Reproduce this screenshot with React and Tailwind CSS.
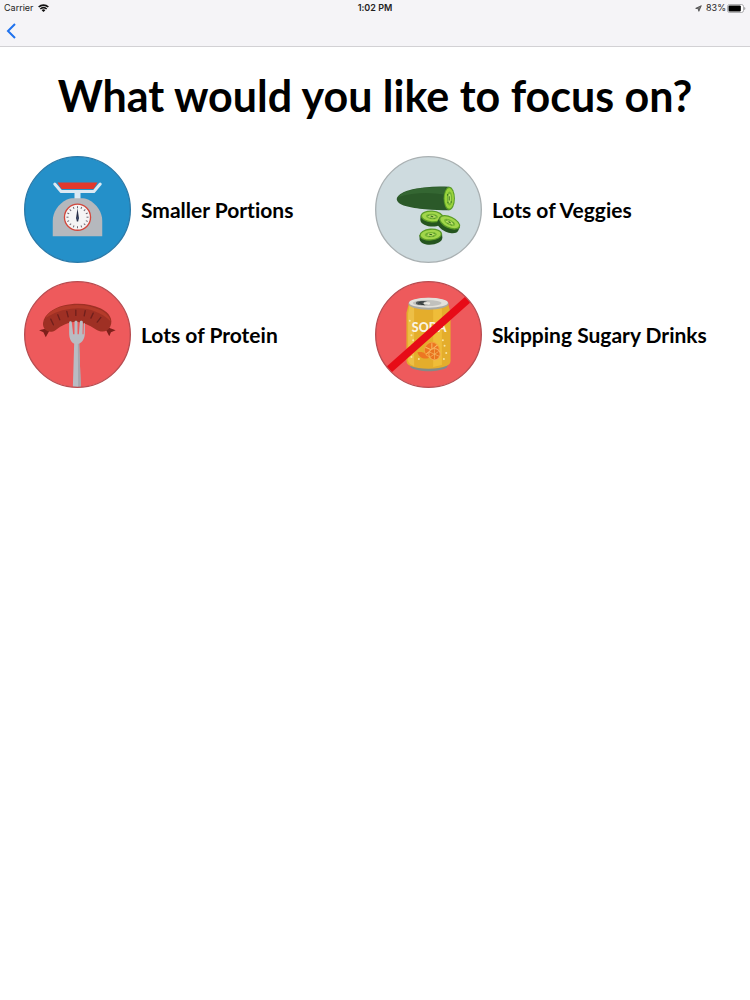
function WifiIcon() {
    return (
        <svg viewBox="0 0 33 24" className="w-[11px] h-2" fill="none" aria-hidden="true">
            <path d="M2 9a21 21 0 0 1 29 0" stroke="#111" strokeWidth="5" />
            <path d="M7 15a13 13 0 0 1 19 0" stroke="#111" strokeWidth="4.6" />
            <path d="M11 18.500a7.500 7.500 0 0 1 11 0L16.500 24z" fill="#111" />
        </svg>
    );
}

function LocationIcon() {
    return (
        <svg viewBox="0 0 21 21" className="w-[7px] h-[7px]" aria-hidden="true">
            <path d="M19 2 2 10l8 1.5L11.500 19z" fill="#777" stroke="#333" strokeWidth="2" strokeLinejoin="round" />
        </svg>
    );
}

function BatteryIcon() {
    return (
        <svg viewBox="0 0 57 27" className="w-[19px] h-[9px]" aria-hidden="true">
            <rect x="1.500" y="1.500" width="48" height="24" rx="6" fill="#fff" stroke="#8a8a8c" strokeWidth="2" />
            <rect x="4.500" y="4.500" width="37" height="18" rx="3" fill="#000" />
            <path d="M52 9c4 1 4 8 0 9z" fill="#8a8a8c" />
        </svg>
    );
}

function ScaleArt() {
    const ticks = Array.from({ length: 16 }, (_, i) => i * 22.5);
    return (
        <svg viewBox="11 18 320 320" className="size-full" aria-hidden="true">
            <circle cx="171" cy="178" r="158" fill="#2490c9" stroke="#2a79a8" strokeWidth="4" />
            <path d="M111 97h120l-12 20H123z" fill="#e2382c" />
            <path d="M103 102 122 124h98l19-22" fill="none" stroke="#dce9f3" strokeWidth="9" strokeLinecap="round" strokeLinejoin="round" />
            <path d="M162 126h18v22h-18z" fill="#dce9f3" />
            <path d="M97 258v-46c0-26 16-50 41-63 8-4 14-5 22-5h22c8 0 14 1 22 5 25 13 41 37 41 63v46z" fill="#b5b8bd" />
            <circle cx="171" cy="201" r="39" fill="#f5f5f5" stroke="#d2473c" strokeWidth="4" />
            {ticks.map((angle) => (
                <path key={angle} d="M171 168v6" stroke="#6e6872" strokeWidth="3" transform={`rotate(${angle} 171 201)`} />
            ))}
            <path d="m171 174 4 28-2 12h-4l-2-12z" fill="#283048" />
            <circle cx="171" cy="204" r="4" fill="#384564" />
        </svg>
    );
}

function CucumberSlice({ x, y, angle }) {
    return (
        <g transform={`translate(${x} ${y}) rotate(${angle})`}>
            <path d="M-34-6v13c2 24 66 24 68 0V-6z" fill="#25551f" />
            <ellipse cy="-5" rx="34" ry="18" fill="#5b9c27" />
            <ellipse cy="-5" rx="30" ry="14" fill="#a2d64b" />
            <ellipse cy="-5" rx="18" ry="8" fill="#78b934" />
            <ellipse cy="-5" rx="12" ry="4" fill="#bae166" />
            <path d="M-13-7h5M8-8h5M-6 0h5M5 0h5" stroke="#487f2b" strokeWidth="2" />
            <path d="m-4-6 8 2" stroke="#35651f" strokeWidth="3" />
        </g>
    );
}

function VeggiesArt() {
    return (
        <svg viewBox="16 18 320 320" className="size-full" aria-hidden="true">
            <circle cx="176" cy="178" r="158" fill="#cedbdf" stroke="#a9b0b2" strokeWidth="4" />
            <path d="M81 147c2-18 38-31 83-35 24-3 48-3 74-2v70c-25 0-47-1-72-3-44-4-84-12-85-30z" fill="#2b5929" />
            <path d="M84 141c12-15 45-24 80-28l63-2-4 22c-46-8-93-6-139 8z" fill="#346632" />
            <ellipse cx="238" cy="145" rx="17" ry="35" fill="#579b28" />
            <ellipse cx="238" cy="145" rx="14" ry="31" fill="#9bd33d" />
            <ellipse cx="239" cy="145" rx="8" ry="21" fill="#73b532" />
            <ellipse cx="239" cy="145" rx="4" ry="14" fill="#b4df60" />
            <path d="M238 138v13M233 132v5M244 153v5M234 155v4" stroke="#3c7524" strokeWidth="3" />
            <CucumberSlice x={186} y={204} angle={4} />
            <CucumberSlice x={237} y={221} angle={25} />
            <CucumberSlice x={183} y={258} angle={-4} />
        </svg>
    );
}

function ProteinArt() {
    return (
        <svg viewBox="11 18 320 320" className="size-full" aria-hidden="true">
            <clipPath id="protein-plate">
                <circle cx="171" cy="178" r="157" />
            </clipPath>
            <circle cx="171" cy="178" r="158" fill="#ee5a5c" />
            <path d="m77 160-21 5 13 6 7 15 13-23zM265 158l20 7-14 6-5 12-12-23z" fill="#7e201b" />
            <path d="M68 143c3-26 33-45 61-52 38-9 80-6 112 9 25 12 38 33 28 54-8 17-27 19-44 8-20-13-38-21-58-22-23 0-43 11-62 25-18 12-40-1-37-22z" fill="#9f3024" />
            <path d="M75 129c12-22 37-33 64-37 35-6 72-1 101 13 16 8 27 20 30 33-31-28-67-40-105-38-37 1-65 13-90 29z" fill="#b53b2a" />
            <path d="m91 132 8 17M112 119l6 15M139 109l4 16M166 105v16M194 107l-3 15M218 114l-7 15M241 127l-11 14" stroke="#701f1c" strokeWidth="4" strokeLinecap="round" />
            <g clipPath="url(#protein-plate)">
                <path d="M146 142c0-5 8-5 8 0l4 35h4v-36c0-5 9-5 9 0v36h4l3-36c0-5 9-5 9 0l-1 36h3l1-30c1-5 3-4 3 1v25c0 19-8 28-17 33l5 132h-24l4-132c-10-5-15-16-15-33z" fill="#b9bcc3" />
                <path d="M172 206h4l5 132h-8z" fill="#a4a8af" />
            </g>
            <circle cx="171" cy="178" r="158" fill="none" stroke="#b84c50" strokeWidth="4" />
        </svg>
    );
}

function SodaArt() {
    const bubbles = [
        [120, 137], [130, 195], [122, 214], [125, 245], [147, 251],
        [224, 212], [229, 233], [222, 251], [219, 195], [125, 180],
    ];
    return (
        <svg viewBox="16 18 320 320" className="size-full" aria-hidden="true">
            <clipPath id="soda-plate">
                <circle cx="176" cy="178" r="157" />
            </clipPath>
            <circle cx="176" cy="178" r="158" fill="#ee5a5c" />
            <path d="M113 255h127l-9 22c-26 15-82 15-108 0z" fill="#858a86" />
            <path d="m117 87-7 26v143c0 8 4 12 10 15 28 13 84 13 112 0 6-3 10-7 10-15V113l-7-26z" fill="#e4ad2c" />
            <path d="m119 91-4 25v138c0 9 8 15 18 18V96z" fill="#edbf46" />
            <path d="M190 100h26v169l-26 6z" fill="#efbd39" />
            <ellipse cx="176" cy="86" rx="60" ry="18" fill="#a9aaa4" />
            <ellipse cx="176" cy="83" rx="58" ry="15" fill="#e3e1db" />
            <ellipse cx="172" cy="84" rx="43" ry="9" fill="#c1c1bd" />
            <ellipse cx="154" cy="84" rx="16" ry="6" fill="#555d5d" />
            <path d="M145 85c7-7 25-7 31 0-5 5-20 5-24 0" fill="none" stroke="#303737" strokeWidth="3" />
            <ellipse cx="171" cy="85" rx="10" ry="4" fill="#e9e7df" />
            <text x="178" y="172" textAnchor="middle" fill="#faf4e4" fontFamily="Lato, sans-serif" fontSize="37" fontWeight="900">
                SODA
            </text>
            {bubbles.map(([x, y]) => (
                <circle key={`${x}-${y}`} cx={x} cy={y} r="3" fill="#f8e4a0" />
            ))}
            <path d="M143 231c16-3 29 3 34 17-14 6-30-1-34-17z" fill="#ed7622" />
            <circle cx="186" cy="224" r="24" fill="#f3a13b" />
            <circle cx="186" cy="224" r="21" fill="#ec7621" />
            <path d="m186 204v40M167 216l38 17M169 237l34-28" stroke="#f8bd65" strokeWidth="3" />
            <circle cx="194" cy="237" r="17" fill="#e9741f" stroke="#f6b15b" strokeWidth="3" />
            <path d="M194 222v30M180 231l28 12M181 245l25-16" stroke="#f6ba66" strokeWidth="2" />
            <g clipPath="url(#soda-plate)">
                <path d="M40 299 310 59" stroke="#e70b17" strokeWidth="23" />
            </g>
            <circle cx="176" cy="178" r="158" fill="none" stroke="#b84c50" strokeWidth="4" />
        </svg>
    );
}

const options = [
    { label: "Smaller Portions", Art: ScaleArt },
    { label: "Lots of Veggies", Art: VeggiesArt },
    { label: "Lots of Protein", Art: ProteinArt },
    { label: "Skipping Sugary Drinks", Art: SodaArt },
];

export default function App() {
    return (
        <div className="min-h-screen bg-white font-['Lato',sans-serif] text-black [font-variant-ligatures:none]">
            <header className="border-b border-[#d2d1d4] bg-[#f5f4f7]">
                <div className="grid grid-cols-3 items-center h-4 px-1 font-['Inter',sans-serif] text-[9px] leading-4 text-[#222]">
                    <div className="flex items-center gap-1">
                        <span>Carrier</span>
                        <WifiIcon />
                    </div>
                    <span className="text-center font-semibold">1:02 PM</span>
                    <div className="flex items-center justify-end gap-1">
                        <LocationIcon />
                        <div className="flex items-center gap-px">
                            <span>83%</span>
                            <BatteryIcon />
                        </div>
                    </div>
                </div>
                <nav className="flex items-center h-[30px] px-1">
                    <button type="button" aria-label="Back" className="flex items-center px-0.5 text-[#1f72ee]">
                        <svg viewBox="0 0 11 16" className="w-[11px] h-4" fill="none" stroke="currentColor" strokeWidth="2" aria-hidden="true">
                            <path d="M9 1 2 8l7 7" />
                        </svg>
                    </button>
                </nav>
            </header>

            <main className="px-6 pt-6">
                <h1 className="text-center text-[43px] leading-[49px] font-bold">What would you like to focus on?</h1>
                <div className="grid grid-cols-2 gap-y-[18px] mt-9">
                    {options.map(({ label, Art }) => (
                        <button key={label} type="button" className="flex items-center gap-2.5 text-left">
                            <span className="block size-[107px] shrink-0">
                                <Art />
                            </span>
                            <span className="text-[21px] leading-7 font-bold">{label}</span>
                        </button>
                    ))}
                </div>
            </main>
        </div>
    );
}
